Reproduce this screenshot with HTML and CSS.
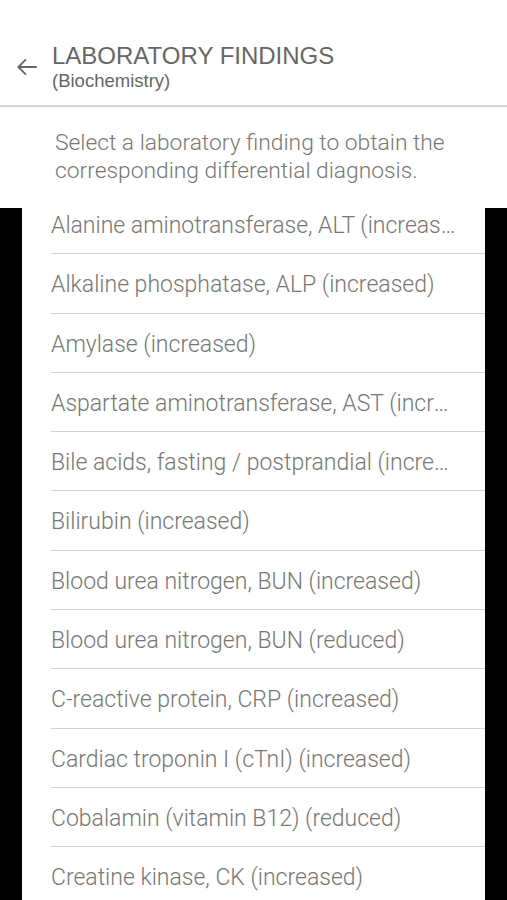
FILE: index.html
```html
<!DOCTYPE html>
<html lang="en">
<head>
  <meta charset="UTF-8"/>
  <meta name="viewport" content="width=device-width,initial-scale=1"/>
  <title>Laboratory Findings</title>
  <link rel="stylesheet" href="styles.css">
</head>
<body>

<!-- header -->
<header class="topbar">
  <button class="back" aria-label="Back">
    <svg width="26" height="26" viewBox="0 0 24 24"><path d="M21 12H4M11 5l-7 7 7 7" fill="none" stroke="#666" stroke-width="1.7"/></svg>
  </button>
  <div class="titles">
    <h1>LABORATORY FINDINGS</h1>
    <div class="sub">(Biochemistry)</div>
  </div>
</header>

<p class="intro">Select a laboratory finding to obtain the corresponding differential diagnosis.</p>

<!-- list -->
<section class="frame">
  <ul class="findings">
    <li>Alanine aminotransferase, ALT (increased)</li>
    <li>Alkaline phosphatase, ALP (increased)</li>
    <li>Amylase (increased)</li>
    <li>Aspartate aminotransferase, AST (increased)</li>
    <li>Bile acids, fasting / postprandial (increased)</li>
    <li>Bilirubin (increased)</li>
    <li>Blood urea nitrogen, BUN (increased)</li>
    <li>Blood urea nitrogen, BUN (reduced)</li>
    <li>C-reactive protein, CRP (increased)</li>
    <li>Cardiac troponin I (cTnI) (increased)</li>
    <li>Cobalamin (vitamin B12) (reduced)</li>
    <li>Creatine kinase, CK (increased)</li>
  </ul>
</section>

</body>
</html>
```

FILE: styles.css
```css
*{box-sizing:border-box}
html,body{margin:0;height:900px;overflow:hidden;background:#fff}
body{font-family:Roboto,"Liberation Sans",sans-serif;color:#777}

.topbar{height:107px;display:flex;align-items:center;padding:28px 0 0 11px;border-bottom:2px solid #d6d6d6;box-shadow:0 1px 1px rgba(0,0,0,.04)}
.back{border:none;background:none;padding:0;width:32px;height:32px;display:flex;align-items:center;justify-content:center;margin-right:9px;margin-top:0}
.titles h1{margin:0;font-family:"Liberation Sans",Arial,sans-serif;font-weight:400;font-size:24px;line-height:28px;color:#666}
.titles .sub{font-family:"Liberation Sans",Arial,sans-serif;font-size:18.5px;line-height:22px;color:#666;margin-top:0}

.intro{margin:0;padding:22px 30px 0 55px;height:88px;font-size:22.8px;font-weight:300;line-height:28px}

.frame{background:linear-gradient(#fff 13px,#000 13px);padding:0 22px;height:705px}
.findings{list-style:none;margin:0;padding:0 0 0 29px;background:#fff;height:100%}
.findings li{height:59.3px;line-height:62px;border-bottom:1.5px solid #d4d4d4;font-size:23px;font-weight:300;white-space:nowrap;overflow:hidden;text-overflow:ellipsis;padding-right:26.5px}
```
